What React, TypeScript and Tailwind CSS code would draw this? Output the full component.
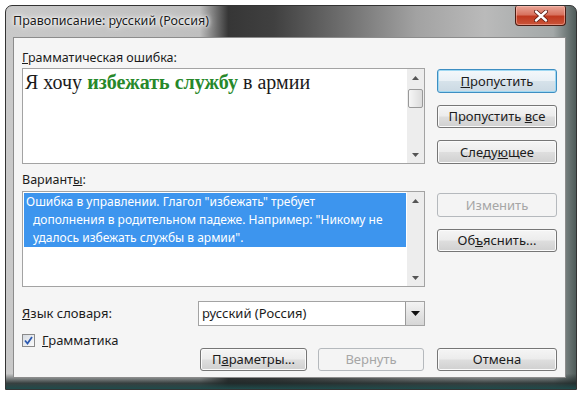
import React from 'react';

interface IButtonProps {
  children: React.ReactNode;
  disabled?: boolean;
  focused?: boolean;
  className?: string;
}

const VistaButton: React.FC<IButtonProps> = ({
  children,
  disabled,
  focused,
  className = '',
}) => {
  return (
    <button
      className={`flex items-center justify-center rounded-[3px] border text-[13px] leading-none ${
        disabled
          ? 'border-[#b5b9bd] bg-[#f4f4f4] text-[#a6a6a6]'
          : focused
          ? 'border-[#3d8ec2] bg-[linear-gradient(180deg,#f4f8fb_0%,#e9f0f5_48%,#d6e2ea_52%,#cbd9e3_100%)] text-[#1c1c1c] shadow-[inset_0_0_0_1px_#9fd8f2]'
          : 'border-[#767676] bg-[linear-gradient(180deg,#f5f5f5_0%,#ececec_48%,#dedede_52%,#d0d0d0_100%)] text-[#1c1c1c] shadow-[inset_0_0_0_1px_#fbfbfb]'
      } ${className}`}
    >
      <span>{children}</span>
    </button>
  );
};

const Arrow: React.FC<{ up?: boolean }> = ({ up }) => (
  <svg width="7" height="4" viewBox="0 0 7 4">
    {up ? (
      <path d="M0 4 L3.5 0 L7 4 Z" fill="#555" />
    ) : (
      <path d="M0 0 L3.5 4 L7 0 Z" fill="#555" />
    )}
  </svg>
);

const ScrollBar: React.FC<{ thumb?: boolean }> = ({ thumb }) => (
  <div className="flex w-[17px] flex-col bg-[#ededed]">
    <div className="flex h-[17px] items-center justify-center">
      <Arrow up />
    </div>
    <div className="flex-1 px-px">
      {thumb && (
        <div className="mt-[3px] h-[19px] rounded-[2px] border border-[#999] bg-[linear-gradient(90deg,#f6f6f6,#dcdcdc)]" />
      )}
    </div>
    <div className="flex h-[17px] items-center justify-center">
      <Arrow />
    </div>
  </div>
);

const App: React.FC = () => {
  return (
    <div className="h-[394px] w-[580px] overflow-hidden bg-white pl-[5px] pt-[5px] font-['Noto_Sans',sans-serif]">
      <div className="flex h-[385px] w-[572px] flex-col rounded-t-[7px] border border-[#333] bg-[linear-gradient(180deg,rgba(0,0,0,0)_96%,rgba(30,40,40,0.85)_98.5%,#1f4b4b_100%),linear-gradient(90deg,#c9c9c9_0%,#bfbfbf_34%,#363636_39%,#404040_47%,#727272_60%,#a2a2a2_72%,#bababa_84%,#a3a8a8_96%,#4f5c5a_100%)] pl-[7px] pr-[10px]">
        {/* title bar */}
        <div className="flex h-[31px] items-start justify-between">
          <div className="pt-[7px] text-[12.5px] leading-[16px] text-[#1a1a1a] [text-shadow:0_0_8px_#fff,0_0_4px_#fff,0_0_2px_#fff]">
            Правописание: русский (Россия)
          </div>
          <div className="flex h-[20px] w-[51px] items-center justify-center rounded-b-[4px] rounded-t-[2px] border border-t-0 border-[#4a1c12] bg-[linear-gradient(180deg,#e9a597_0%,#d8735f_45%,#c0391f_55%,#c9553a_100%)] shadow-[inset_0_0_0_1px_rgba(255,200,190,0.5)]">
            <svg width="14" height="12" viewBox="0 0 14 12">
              <path
                d="M2 1.5 L12 10.5 M12 1.5 L2 10.5"
                stroke="#5a1a10"
                strokeWidth="4"
                strokeLinecap="round"
              />
              <path
                d="M2 1.5 L12 10.5 M12 1.5 L2 10.5"
                stroke="#fff"
                strokeWidth="2.4"
                strokeLinecap="round"
              />
            </svg>
          </div>
        </div>

        {/* client area */}
        <div className="flex h-[341px] w-[553px] flex-col border border-[#8c8c8c] bg-[#f5f5f5] px-[8px] text-[12px] text-[#1c1c1c]">
          {/* section 1 */}
          <div className="flex gap-[12px]">
            <div className="flex w-[403px] flex-col">
              <div className="mt-[12px] text-[12.5px] leading-4">
                <span className="underline">Г</span>рамматическая ошибка:
              </div>
              <div className="mt-[2px] flex h-[96px] border border-[#a3a3a3] bg-white">
                <div className="flex-1 pl-[2px] pt-[1px] font-['Liberation_Serif',serif] text-[20px] leading-[24px] text-[#1a1a1a]">
                  Я хочу{' '}
                  <span className="font-bold text-[#27882a]">
                    избежать службу
                  </span>{' '}
                  в армии
                </div>
                <ScrollBar thumb />
              </div>
            </div>
            <div className="flex w-[120px] flex-col pt-[31px]">
              <VistaButton focused className="h-[24px]">
                <span className="underline">П</span>ропустить
              </VistaButton>
              <VistaButton className="mt-[12px] h-[23px]">
                Пропустить <span className="underline">в</span>се
              </VistaButton>
              <VistaButton className="mt-[12px] h-[24px]">
                Следу<span className="underline">ю</span>щее
              </VistaButton>
            </div>
          </div>

          {/* section 2 */}
          <div className="flex gap-[12px]">
            <div className="flex w-[403px] flex-col">
              <div className="mt-[8px] text-[12.5px] leading-4">
                Вариант<span className="underline">ы</span>:
              </div>
              <div className="mt-[3px] flex h-[96px] border border-[#a3a3a3] bg-white">
                <div className="flex-1 p-px">
                  <div className="bg-[#3d95ee] leading-[18px] text-white">
                    <div className="pl-[2px]">
                      Ошибка в управлении. Глагол "избежать" требует
                    </div>
                    <div className="pl-[9px]">
                      дополнения в родительном падеже. Например: "Никому не
                    </div>
                    <div className="pl-[9px]">
                      удалось избежать службы в армии".
                    </div>
                  </div>
                </div>
                <ScrollBar />
              </div>
            </div>
            <div className="flex w-[120px] flex-col pt-[29px]">
              <VistaButton disabled className="h-[24px]">
                Изменить
              </VistaButton>
              <VistaButton className="mt-[12px] h-[23px]">
                Об<span className="underline">ъ</span>яснить...
              </VistaButton>
            </div>
          </div>

          {/* dictionary language */}
          <div className="mt-[14px] flex h-[25px] w-[403px] items-center">
            <div className="w-[176px] text-[13px]">
              <span className="underline">Я</span>зык словаря:
            </div>
            <div className="flex h-[25px] flex-1 border border-[#a3a3a3] bg-white">
              <div className="flex flex-1 items-center pl-[3px] text-[13px]">
                русский (Россия)
              </div>
              <div className="flex w-[19px] items-center justify-center border-l border-[#9a9a9a] bg-[linear-gradient(180deg,#f3f3f3,#d6d6d6)]">
                <svg width="9" height="5" viewBox="0 0 9 5">
                  <path d="M0 0 L4.5 5 L9 0 Z" fill="#111" />
                </svg>
              </div>
            </div>
          </div>

          {/* grammar checkbox */}
          <div className="mt-[7px] flex h-[14px] items-center gap-[7px]">
            <div className="flex h-[13px] w-[13px] items-center justify-center border border-[#8a8a8a] bg-[linear-gradient(135deg,#d6dbe2,#fbfbfb)]">
              <svg width="9" height="9" viewBox="0 0 9 9">
                <path
                  d="M1 4.5 L3.5 7.5 L8 1"
                  stroke="#2c59b0"
                  strokeWidth="1.8"
                  fill="none"
                />
              </svg>
            </div>
            <div className="text-[13px] leading-4">
              <span className="underline">Г</span>рамматика
            </div>
          </div>

          {/* bottom buttons */}
          <div className="mt-[1px] flex justify-end">
            <VistaButton className="h-[23px] w-[107px]">
              П<span className="underline">а</span>раметры...
            </VistaButton>
            <VistaButton disabled className="ml-[11px] h-[23px] w-[106px]">
              Вернуть
            </VistaButton>
            <VistaButton className="ml-[13px] h-[23px] w-[120px]">
              Отмена
            </VistaButton>
          </div>
        </div>
      </div>
    </div>
  );
};

export default App;
